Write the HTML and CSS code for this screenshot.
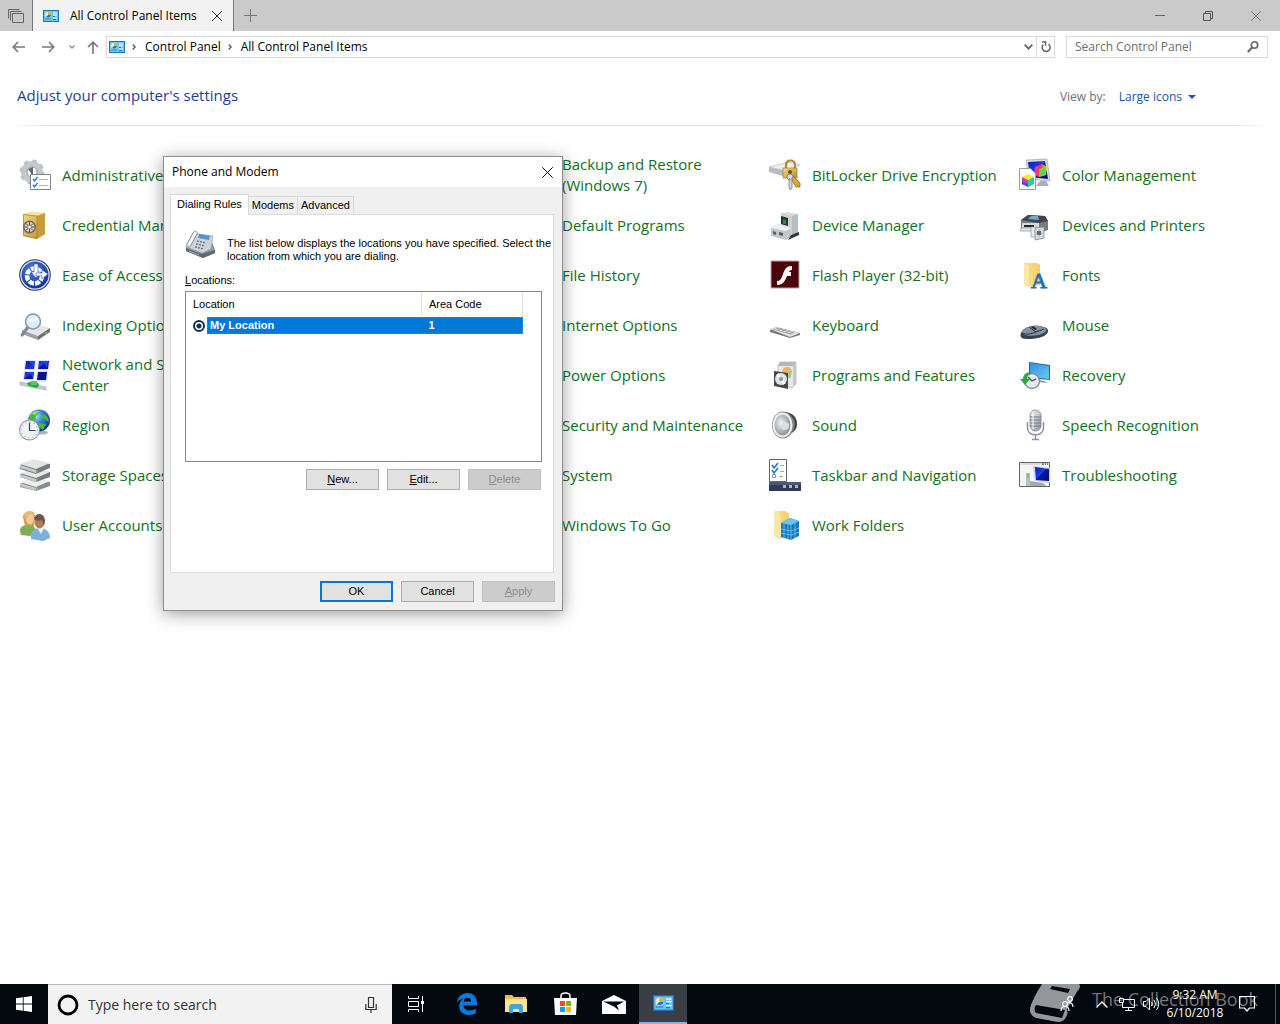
FILE: index.html
```html
<!DOCTYPE html>
<html lang="en">
<head>
<meta charset="utf-8">
<meta name="viewport" content="width=device-width, initial-scale=1">
<title>All Control Panel Items</title>
<link rel="stylesheet" href="styles.css">
</head>
<body>
<svg class="defs" width="0" height="0" aria-hidden="true">
  <defs>
    <linearGradient id="gold" x1="0" y1="0" x2="1" y2="1"><stop offset="0" stop-color="#f3dc8b"/><stop offset="1" stop-color="#b8892c"/></linearGradient>
    <linearGradient id="steel" x1="0" y1="0" x2="1" y2="1"><stop offset="0" stop-color="#f6f7f9"/><stop offset="1" stop-color="#8f959c"/></linearGradient>
    <linearGradient id="folder" x1="0" y1="0" x2="1" y2="0"><stop offset="0" stop-color="#fbe08a"/><stop offset="1" stop-color="#f3cf6b"/></linearGradient>
    <linearGradient id="screen" x1="0" y1="0" x2="1" y2="1"><stop offset="0" stop-color="#0a1db0"/><stop offset=".45" stop-color="#1c3de8"/><stop offset=".5" stop-color="#0a17a0"/><stop offset="1" stop-color="#050d78"/></linearGradient>
    <linearGradient id="sky" x1="0" y1="0" x2="1" y2="1"><stop offset="0" stop-color="#2f94de"/><stop offset="1" stop-color="#6cc7fb"/></linearGradient>
    <radialGradient id="globe" cx=".35" cy=".3" r=".75"><stop offset="0" stop-color="#bfe6ff"/><stop offset=".4" stop-color="#3d8fe0"/><stop offset="1" stop-color="#0b2f86"/></radialGradient>
    <radialGradient id="access" cx=".4" cy=".3" r=".8"><stop offset="0" stop-color="#4f7fd6"/><stop offset="1" stop-color="#0d2a8a"/></radialGradient>
    <radialGradient id="cone" cx=".4" cy=".4" r=".7"><stop offset="0" stop-color="#f2f5f7"/><stop offset=".5" stop-color="#b3bcc3"/><stop offset="1" stop-color="#7d868d"/></radialGradient>
    <linearGradient id="rainbow" x1="0" y1="0" x2="1" y2="0"><stop offset="0" stop-color="#e930d0"/><stop offset=".5" stop-color="#f33"/><stop offset="1" stop-color="#f9e52c"/></linearGradient>
    <symbol id="cpl" viewBox="0 0 16 12">
      <rect width="16" height="12" fill="#1a76bd"/><rect x="1" y="1" width="14" height="10" fill="#6cc6f4"/>
      <circle cx="5" cy="5" r="3" fill="#d9f1ff"/><path d="M5 5V2a3 3 0 0 1 3 3z" fill="#f4a52b"/><path d="M5 5h3a3 3 0 0 1-5 2z" fill="#2476c0"/>
      <path d="M10 3h4M10 5h4M10 8h4" stroke="#fff"/><path d="M2 9h6" stroke="#2e8ac9"/><path d="M10 6.500h2M10 9.500h3" stroke="#236fab"/>
    </symbol>
  </defs>
</svg>

<header class="tabbar">
  <button class="tab-set" aria-label="Tabs you've set aside"><svg width="16" height="14" viewBox="0 0 16 14"><path d="M.5 9.500v-9h11M2.500 11.500v-9h11M4.500 4.500h11v9h-11z" fill="none" stroke="#666"/></svg></button>
  <div class="tab">
    <svg width="16" height="12"><use href="#cpl"/></svg>
    <span>All Control Panel Items</span>
    <button class="plain" aria-label="Close tab"><svg width="10" height="10" viewBox="0 0 10 10"><path d="M0 0l10 10M10 0L0 10" stroke="#333"/></svg></button>
  </div>
  <button class="new-tab" aria-label="New tab"><svg width="13" height="13" viewBox="0 0 13 13"><path d="M6.500 0v13M0 6.500h13" stroke="#777"/></svg></button>
  <div class="window-buttons">
    <button aria-label="Minimize"><svg width="10" height="10" viewBox="0 0 10 10"><path d="M0 4.500h10" stroke="#666"/></svg></button>
    <button aria-label="Restore"><svg width="10" height="10" viewBox="0 0 10 10"><path d="M.5 2.500h7v7h-7zM2.500 2.500v-2h7v7h-2" fill="none" stroke="#555"/></svg></button>
    <button aria-label="Close"><svg width="10" height="10" viewBox="0 0 10 10"><path d="M0 0l10 10M10 0L0 10" stroke="#777"/></svg></button>
  </div>
</header>

<nav class="navbar" aria-label="Address">
  <button class="plain back" aria-label="Back"><svg width="13" height="12" viewBox="0 0 13 12"><path d="M13 6H1.500M6 1L1.200 6 6 11" fill="none" stroke="#777" stroke-width="1.600"/></svg></button>
  <button class="plain forward" aria-label="Forward"><svg width="13" height="12" viewBox="0 0 13 12"><path d="M0 6h11.500M7 1l4.800 5L7 11" fill="none" stroke="#777" stroke-width="1.600"/></svg></button>
  <button class="plain recent" aria-label="Recent locations"><svg width="6" height="4" viewBox="0 0 6 4"><path d="M.5.500L3 3 5.500.500" fill="none" stroke="#888" stroke-width="1.300"/></svg></button>
  <button class="plain up" aria-label="Up"><svg width="12" height="13" viewBox="0 0 12 13"><path d="M6 13V1.500M1 6l5-4.800L11 6" fill="none" stroke="#777" stroke-width="1.600"/></svg></button>
  <div class="address">
    <svg width="16" height="12"><use href="#cpl"/></svg>
    <svg class="crumb" width="4" height="6" viewBox="0 0 4 6"><path d="M.7.500L3.200 3 .7 5.500" fill="none" stroke="#555" stroke-width="1.300"/></svg>
    <a href="#">Control Panel</a>
    <svg class="crumb" width="4" height="6" viewBox="0 0 4 6"><path d="M.7.500L3.200 3 .7 5.500" fill="none" stroke="#555" stroke-width="1.300"/></svg>
    <a href="#">All Control Panel Items</a>
    <button class="plain history" aria-label="Previous locations"><svg width="9" height="6" viewBox="0 0 9 6"><path d="M.7.700l3.800 4 3.800-4" fill="none" stroke="#666" stroke-width="1.800"/></svg></button>
    <button class="refresh" aria-label="Refresh"><svg width="10" height="12" viewBox="0 0 10 12"><path d="M7.500 3.200A4 4 0 1 1 2.300 3.600M1 1h3.600v3.800" fill="none" stroke="#666" stroke-width="1.500"/></svg></button>
  </div>
  <label class="search">
    <input type="text" placeholder="Search Control Panel" aria-label="Search Control Panel">
    <svg width="12" height="12" viewBox="0 0 12 12"><circle cx="7.500" cy="4" r="3.200" fill="none" stroke="#666" stroke-width="1.600"/><path d="M5 6.500L.8 11" stroke="#666" stroke-width="2"/></svg>
  </label>
</nav>

<main>
  <div class="heading">
    <h1>Adjust your computer's settings</h1>
    <span class="view-label">View by:</span>
    <button class="view">Large icons <svg width="8" height="4" viewBox="0 0 8 4"><path d="M0 0h8L4 4z" fill="#1a56b0"/></svg></button>
  </div>

  <div class="items">
    <ul class="column first">
      <li><a href="#"><svg viewBox="0 0 32 32"><circle cx="13" cy="13" r="8" fill="none" stroke="#c3c9ce" stroke-width="6"/><circle cx="13" cy="13" r="11" fill="none" stroke="#bcc3c9" stroke-width="3" stroke-dasharray="4.300 4.340"/><circle cx="13" cy="13" r="5" fill="#fff" stroke="#8d979f"/><path d="M9 10l5 7v-9z" fill="#5f6870"/><path d="M11.500 15.500h20v15h-20z" fill="#fff" stroke="#7b8288"/><path d="M20 20.500h9M20 26.500h9" stroke="#a9b7c4"/><path d="M14 20l1.500 2 3-4M14 26l1.500 2 3-4" fill="none" stroke="#1a77d2" stroke-width="1.300"/></svg>Administrative Tools</a></li>
      <li><a href="#"><svg viewBox="0 0 32 32"><path d="M4 5l7-2 15 1v21l-9 5-13-3z" fill="url(#gold)"/><path d="M4 5l14 2 8-3-14-1z" fill="#f5e3a0"/><path d="M18 7l8-3v21l-8 5z" fill="#c99c37"/><path d="M4.500 5.500L18 7v22.500l-13.500-3z" fill="none" stroke="#a97f2c" stroke-width=".7"/><circle cx="10.500" cy="18" r="6.500" fill="#6f6756"/><circle cx="10.500" cy="18" r="5" fill="#dcd5c3"/><path d="M10.500 13v10M5.500 18h10M7 14.500l7 7M14 14.500l-7 7" stroke="#4c473c"/><circle cx="10.500" cy="18" r="1.500" fill="#eee"/></svg>Credential Manager</a></li>
      <li><a href="#"><svg viewBox="0 0 32 32"><circle cx="16" cy="16" r="15.800" fill="#1e3160"/><circle cx="16" cy="16" r="14.800" fill="#dce5f3"/><circle cx="16" cy="16" r="13.500" fill="url(#access)"/><circle cx="15.500" cy="17" r="7.500" fill="none" stroke="#fff" stroke-width="4.500" stroke-dasharray="5.200 1.200" stroke-dashoffset="-6"/><path d="M15 5h4v8h3l-5 6-5-6h3z" fill="#fff" stroke="#2d55b5" stroke-width=".6"/><path d="M17 14h6v-3l6 4-6 5v-3h-6z" fill="#fff" stroke="#2d55b5" stroke-width=".6"/></svg>Ease of Access Center</a></li>
      <li><a href="#"><svg viewBox="0 0 32 32"><path d="M3 21l14-6 14 4-12 8z" fill="#e3e5e7"/><path d="M3 21l16 6v4L3 25z" fill="#9ca0a5"/><path d="M31 19l-12 8v4l12-8z" fill="#6d7176"/><circle cx="27" cy="24" r="1" fill="#5cd65c"/><path d="M9 18l-6 8" stroke="#7c8994" stroke-width="3" stroke-linecap="round"/><circle cx="14" cy="12.500" r="7.500" fill="#d5ebfb" fill-opacity=".85" stroke="#8996a5" stroke-width="1.500"/><path d="M9 13c3-5 7-5 10-3-2 3-6 2-10 3z" fill="#fff"/></svg>Indexing Options</a></li>
      <li><a href="#"><svg viewBox="0 0 32 32"><path d="M6 1h11l-1 10H5zM19 1h12l-1 10H18zM5 12h11l-1 9H4zM18 12h11l-1 11H17z" fill="#dbe3ef"/><path d="M7 2h9l-1 8H6zM20 2h10l-1 8H19zM6 13h9l-1 7H5zM19 13h9l-1 8h-9z" fill="url(#screen)"/><path d="M10 2l6 0-1 6zM24 2h5l-1 7zM10 13h5l-1 6z" fill="#2545e0"/><path d="M1 23l26 5v3L1 26z" fill="#c8cdd0" stroke="#90969a" stroke-width=".5"/><path d="M8 25c0-3 12-3 12 1l-2 3-8-2z" fill="#22a648"/><path d="M12 22h6v4h-6z" fill="#4acc6b"/></svg>Network and Sharing Center</a></li>
      <li><a href="#"><svg viewBox="0 0 32 32"><ellipse cx="22" cy="23.500" rx="7" ry="2" fill="#a8b3bd"/><circle cx="20" cy="11.500" r="11" fill="url(#globe)"/><path d="M11 8c3-6 8-6 9-4l-3 3-1 4-5 2zM23 5c4 0 7 4 7 8l-3-2-4-2zM20 14l7 1-3 6-4-3z" fill="#49b53a"/><path d="M13 5c2-3 5-3 7-3l-4 4z" fill="#a3e06b"/><circle cx="10.500" cy="21" r="10.500" fill="#8e979f"/><circle cx="10.500" cy="21" r="9.500" fill="#eef3f6"/><path d="M10.500 13.500v8h6" fill="none" stroke="#34495e" stroke-width="1.200"/><circle cx="10.500" cy="21" r="8" fill="none" stroke="#a0afba" stroke-width="1.200" stroke-dasharray="1 3.190"/></svg>Region</a></li>
      <li><a href="#"><svg viewBox="0 0 32 32"><path d="M1 25l10-4 20 2v4l-14 5-16-4z" fill="#888c90"/><path d="M1 23l13-4 17 3-14 6z" fill="#eceded"/><path d="M1 15l10-4 20 2v5l-14 5-16-5z" fill="#777b80"/><path d="M1 14l13-4 17 3-14 6z" fill="#e8e9ea"/><path d="M1 6l10-4 20 3v4l-14 6-16-5z" fill="#777b80"/><path d="M1 5l14-5 16 4-14 6z" fill="#e3e4e6"/><path d="M1 6l16 5v3L1 9zM1 15l16 5v3L1 18zM1 24l16 5v3L1 27z" fill="#c6c8cb"/><path d="M18 11v4M18 20v3M18 28v3" stroke="#a9b85c" stroke-width="1.200"/></svg>Storage Spaces</a></li>
      <li><a href="#"><svg viewBox="0 0 32 32"><path d="M1 22c0-5 4-6 9-6s7 3 7 8l-6 3-9-1z" fill="#7fae57"/><path d="M4 8c0-6 12-8 12 0l-1 9H6z" fill="#c9a257"/><ellipse cx="11" cy="9.500" rx="4" ry="6" fill="#f3c99b"/><path d="M5 6c1-5 10-5 11-1-4-1-7 0-9 6z" fill="#e1bd68"/><path d="M12 27c0-6 4-8 9-8s10 3 10 10l-7 3-12-2z" fill="#7db0de"/><path d="M18 19l4 6 3-6z" fill="#e8f2fb"/><ellipse cx="20.500" cy="13" rx="5" ry="6.500" fill="#b77b51"/><path d="M15 10c1-7 11-7 11 2l-1 5-2-6c-3 1-6 1-8-1z" fill="#6d5748"/></svg>User Accounts</a></li>
    </ul>
    <ul class="column third">
      <li><a href="#"><i class="no-icon"></i>Backup and Restore (Windows 7)</a></li>
      <li><a href="#"><i class="no-icon"></i>Default Programs</a></li>
      <li><a href="#"><i class="no-icon"></i>File History</a></li>
      <li><a href="#"><i class="no-icon"></i>Internet Options</a></li>
      <li><a href="#"><i class="no-icon"></i>Power Options</a></li>
      <li><a href="#"><i class="no-icon"></i>Security and Maintenance</a></li>
      <li><a href="#"><i class="no-icon"></i>System</a></li>
      <li><a href="#"><i class="no-icon"></i>Windows To Go</a></li>
    </ul>
    <ul class="column">
      <li><a href="#"><svg viewBox="0 0 32 32"><path d="M0 8l20-5 11 3-14 6z" fill="#eceef0" stroke="#b0b2bb" stroke-width=".6"/><path d="M0 8l17 4v6L0 13z" fill="#b9bbc4"/><path d="M17 9V6c0-6 9-6 9 0v4" fill="none" stroke="#b38a28" stroke-width="2.200"/><path d="M14 9h14v10H14z" fill="url(#gold)" stroke="#9c7620" stroke-width=".6"/><circle cx="21" cy="13" r="2" fill="#6e5215"/><path d="M22 15l9 9v4h-4l-6-10z" fill="#d5a93c" stroke="#7e5c13" stroke-width=".7"/><circle cx="21" cy="18" r="3" fill="#d8dade" stroke="#777" stroke-width=".8"/><path d="M20 20h3v9l-1.500 2-1.500-2z" fill="#d5d8da" stroke="#777" stroke-width=".8"/></svg>BitLocker Drive Encryption</a></li>
      <li><a href="#"><svg viewBox="0 0 32 32"><path d="M12 4l7-1 10 2v18l-6 4-11-5z" fill="#dcdde1"/><path d="M23 7l6-2v19l-6 3z" fill="#b9bbc1"/><path d="M12 4l11 3v17l-11-3z" fill="#cfd0d6"/><path d="M12 7l7 2v8l-7-2z" fill="#26352c"/><path d="M14 10l3 1v4h-3z" fill="#2d8a4c"/><path d="M2 19l7-4 13 4v9l-5 3-15-4z" fill="#c3c5cb"/><path d="M2 19l7-4 13 4-5 3z" fill="#edeef0"/><path d="M4 22l3 1v3l-3-1zM10 23l4 1v3l-4-1z" fill="#5a606b"/><path d="M22 26l8-3v3l-11 5z" fill="#33363b"/></svg>Device Manager</a></li>
      <li><a href="#"><svg viewBox="0 0 32 32"><path d="M2 2h28v27H2z" fill="#4c0508" stroke="#b4a6a7"/><path d="M23 7c-6 0-7 3-9 8-2 6-3 7-6 7v4c6 0 8-4 10-9h4v-4h-2c1-2 2-2 3-2z" fill="#fff"/></svg>Flash Player (32-bit)</a></li>
      <li><a href="#"><svg viewBox="0 0 32 32"><path d="M1 21l6-3 24 6v2l-10 3L1 23z" fill="#74777b"/><path d="M1 20l6-2 24 6-10 4z" fill="#dfe1e3"/><path d="M4 20l18 5M7 19l18 5M9 21l4-2M13 22l4-2M17 23.500l4-2M21 25l4-2" stroke="#909498" stroke-width=".8"/></svg>Keyboard</a></li>
      <li><a href="#"><svg viewBox="0 0 32 32"><path d="M9 7l2-4h16v22l-4 4-14-4z" fill="#e7e8ea" stroke="#a0a2a5" stroke-width=".6"/><path d="M9 7h15l3-4H11z" fill="#b3b8c0"/><path d="M24 7l3-4v22l-3 3z" fill="#c6c8cc"/><circle cx="18" cy="13" r="5" fill="#f6ae62"/><path d="M17 12h5v7h-5z" fill="#a8cd82"/><path d="M5 12l14 2v16L5 27z" fill="#44484c"/><circle cx="12" cy="20" r="6" fill="#e0e3e6"/><path d="M12 20l-5-4 3-2zM12 20l5 4-3 2z" fill="#fff"/><circle cx="12" cy="20" r="2" fill="#8d9297"/></svg>Programs and Features</a></li>
      <li><a href="#"><svg viewBox="0 0 32 32"><path d="M16 3c8 1 12 5 12 12s-5 9-11 12z" fill="#3d4043"/><path d="M24 9c3 2 3 9 0 12z" fill="#6a6e72"/><ellipse cx="14" cy="16" rx="11" ry="13.500" fill="#84898d"/><ellipse cx="13.500" cy="16" rx="10" ry="12.500" fill="#f0f2f3"/><ellipse cx="13.500" cy="16" rx="8" ry="10.500" fill="url(#cone)"/><circle cx="16" cy="17" r="4" fill="#d9e0e4"/></svg>Sound</a></li>
      <li><a href="#"><svg viewBox="0 0 32 32"><path d="M.5.500h17v22H.5z" fill="#fff" stroke="#666"/><path d="M3 6l2 3 4-5M3 11l2 3 4-5" fill="none" stroke="#1976d2" stroke-width="1.600"/><path d="M3.500 15.500h3v3h-3z" fill="none" stroke="#9b85b9"/><path d="M11 6.500h4M11 12.500h4M10 17.500h4" stroke="#aaa"/><path d="M0 23h32v9H0z" fill="#303c57"/><path d="M0 23h32v3H0z" fill="#49587b"/><path d="M14 26h3v3h-3zM20 26h3v3h-3zM26 26h3v3h-3z" fill="#a9b6cf"/></svg>Taskbar and Navigation</a></li>
      <li><a href="#"><svg viewBox="0 0 32 32"><path d="M5 2l11 0 4 3v22l-10 3-5-3z" fill="url(#folder)"/><path d="M5 2h4l3 7v18l-2 3-5-4z" fill="#f9e7a8"/><path d="M12 14l9-5 9 3v15l-8 4-10-3z" fill="#1479bf"/><path d="M12 14l9-5 9 3-8 4z" fill="#70c5f0"/><path d="M12 20l10 2 8-3M12 24l10 2 8-3M15 14v15M19 15v15M22 16v15M26 14v15" fill="none" stroke="#74c3ee" stroke-width=".8"/></svg>Work Folders</a></li>
    </ul>
    <ul class="column">
      <li><a href="#"><svg viewBox="0 0 32 32"><path d="M7 1l21-1 3 22-21-2z" fill="#d9dce2" stroke="#90959b" stroke-width=".6"/><path d="M9 3l17-1 3 18-18-2z" fill="url(#screen)"/><path d="M16 8l7-3 5 3-1 8-7 2-5-2z" fill="url(#rainbow)"/><path d="M20 10l7-2v8l-7 2z" fill="#5bd94b"/><path d="M21 22l6 0 3 5H17z" fill="#aab0b8"/><path d="M.5 9.500h11l5 5v16H.5z" fill="#fff" stroke="#9b9fa4"/><path d="M3 18l6-3 6 3-6 3z" fill="#ffe82f"/><path d="M3 18l6 3v7l-6-3z" fill="#e834a3"/><path d="M9 21l6-3v7l-6 3z" fill="#26d29a"/><path d="M3 22l6 3v3l-6-3z" fill="#3157ef"/></svg>Color Management</a></li>
      <li><a href="#"><svg viewBox="0 0 32 32"><path d="M2 11l7-5 17 1 3 5v9l-6 2-21-2z" fill="#777c82"/><path d="M2 11l7-5 17 1 3 5-9 2z" fill="#41464c"/><path d="M12 7h7l1 4-11-1z" fill="#75a7cc"/><path d="M3 14h17v6H3z" fill="#d7dadd"/><path d="M5 16h10v2H5z" fill="#202327"/><path d="M2 19h12v3H1z" fill="#e9ebec" stroke="#777" stroke-width=".6"/><path d="M12 18h7v10h-7z" fill="#e7e9eb" stroke="#888" stroke-width=".6"/><path d="M16 19l9-1v11l-9 2z" fill="#d5d8da" stroke="#85898d" stroke-width=".8"/><circle cx="20" cy="24" r="3" fill="#64686d" stroke="#ddd"/></svg>Devices and Printers</a></li>
      <li><a href="#"><svg viewBox="0 0 32 32"><path d="M5 4h13l3 2v20l-10 2-6-2z" fill="url(#folder)"/><path d="M5 4l5 3v21l-5-2z" fill="#fbe8a9"/><text class="font-glyph" x="12" y="29">A</text></svg>Fonts</a></li>
      <li><a href="#"><svg viewBox="0 0 32 32"><path d="M2 24c2-6 12-8 19-7 6 1 9 3 8 6-3 6-13 7-20 7-5 0-9-1-7-6z" fill="#39434d"/><path d="M3 23c2-5 11-7 18-6 5 1 7 3 6 5-3 5-23 7-24 1z" fill="#8592a0"/><path d="M10 18l7 5 8-3M17 23c-5 2-10 3-14 1" fill="none" stroke="#28323d"/><path d="M12 18l4 3 2-1-4-3z" fill="#202832"/></svg>Mouse</a></li>
      <li><a href="#"><svg viewBox="0 0 32 32"><path d="M10 3l21 3v15l-21-2z" fill="#2268a7"/><path d="M11 4l19 3v13l-19-2z" fill="url(#sky)"/><path d="M20 21l5 1 4 2-10-1z" fill="#8f969e"/><circle cx="13" cy="22" r="7.500" fill="#e6eaec" stroke="#85909a" stroke-width="1.500"/><path d="M9 18l4 4 4-2" fill="none" stroke="#505b65" stroke-width="1.400"/><path d="M12 13c-5 0-8 3-8 7H1l5 6 5-6H8c0-3 1-4 4-5z" fill="#29a845"/></svg>Recovery</a></li>
      <li><a href="#"><svg viewBox="0 0 32 32"><path d="M8.500 13v6c0 9 16 9 16 0v-6M16.500 26v4M13 30.500h7" fill="none" stroke="#8e92a0" stroke-width="1.500"/><rect x="11" y="1" width="11" height="21" rx="5.500" fill="url(#steel)" stroke="#7d8190" stroke-width=".8"/><path d="M11 8h11M11 11h11M11 14h11M11 17h11" stroke="#737787" stroke-width="1.100"/><path d="M14 4v16" stroke="#fff"/></svg>Speech Recognition</a></li>
      <li><a href="#"><svg viewBox="0 0 32 32"><path d="M.5 3.500h30v24H.5z" fill="#f5f5f5" stroke="#666"/><path d="M1 4h29v2H1z" fill="#ddd"/><path d="M23 5h2M26 5h1M28 5h1" stroke="#333"/><path d="M14 7l17 2v15l-15-2z" fill="#c6ccd6"/><path d="M16 8l14 2v12l-13-1z" fill="url(#screen)"/><path d="M7 14h4v13H7z" fill="#b9bec3"/><path d="M11 22l13 2 3 3H11z" fill="#a2aab4"/><path d="M8 16h2M8 18h2" stroke="#48b154"/></svg>Troubleshooting</a></li>
    </ul>
  </div>
</main>

<section class="dialog" role="dialog" aria-labelledby="dialog-title">
  <header class="dialog-title">
    <h2 id="dialog-title">Phone and Modem</h2>
    <button class="plain" aria-label="Close"><svg width="11" height="11" viewBox="0 0 11 11"><path d="M.3.300l10.400 10.400M10.700.300L.3 10.700" stroke="#000"/></svg></button>
  </header>
  <div class="dialog-body">
    <div class="tabs" role="tablist">
      <button class="selected" role="tab" aria-selected="true">Dialing Rules</button>
      <button role="tab">Modems</button>
      <button role="tab">Advanced</button>
    </div>
    <div class="panel" role="tabpanel">
      <div class="intro">
        <svg width="32" height="32" viewBox="0 0 32 32"><path d="M1 19l3-8 22-1 4 11v3l-12 5L1 22z" fill="#8e959c"/><path d="M1 19l16 6 13-4v3l-12 5L1 22z" fill="#62696f"/><path d="M1 18L8 4l20 3-2 13-9 4z" fill="#cfd4d9" stroke="#9299a0" stroke-width=".6"/><path d="M14 5l11 2-1 4-11-2z" fill="#4d96cc"/><path d="M2 15L8 4c1-3 5-2 4 1L6 16c-1 3-5 2-4-1z" fill="#f5f6f7" stroke="#6e757c" stroke-width=".8"/><path d="M12 12l9 2M11 15l9 2M10 18l9 2" stroke="#65707a" stroke-width="1.300" stroke-dasharray="2 1"/><path d="M4 22l10 4" stroke="#8fb5cd"/></svg>
        <p>The list below displays the locations you have specified. Select the location from which you are dialing.</p>
      </div>
      <p class="list-label"><u>L</u>ocations:</p>
      <div class="list">
        <table>
          <thead><tr><th>Location</th><th>Area Code</th></tr></thead>
          <tbody><tr>
            <td class="place"><label><input type="radio" name="place" checked><span>My Location</span></label></td>
            <td class="code"><span>1</span></td>
          </tr></tbody>
        </table>
      </div>
      <div class="actions">
        <button class="btn"><span><u>N</u>ew...</span></button>
        <button class="btn"><span><u>E</u>dit...</span></button>
        <button class="btn" disabled><span><u>D</u>elete</span></button>
      </div>
    </div>
    <div class="actions bottom">
      <button class="btn default">OK</button>
      <button class="btn">Cancel</button>
      <button class="btn" disabled><span><u>A</u>pply</span></button>
    </div>
  </div>
</section>

<footer class="taskbar">
  <button class="start" aria-label="Start"><svg width="16" height="16" viewBox="0 0 16 16"><path d="M0 2.300l6.800-1v6.300H0zM7.600 1.200L16 0v7.600H7.600zM0 8.400h6.800v6.300l-6.800-1zM7.600 8.400H16V16l-8.400-1.200z" fill="#fff"/></svg></button>
  <label class="task-search">
    <svg width="22" height="22" viewBox="0 0 22 22"><circle cx="11" cy="11" r="9" fill="none" stroke="#000" stroke-width="2.800"/></svg>
    <input type="text" placeholder="Type here to search" aria-label="Type here to search">
    <svg width="12" height="18" viewBox="0 0 12 18"><path d="M3.500 1.500h5v10h-5zM.8 8v5.500h10.400V8M6 13.500V17" fill="none" stroke="#333" stroke-width="1.200"/></svg>
  </label>
  <button class="task-view" aria-label="Task View"><svg width="17" height="16" viewBox="0 0 17 16"><path d="M.5 0v2.500h10V0M.5 5.500h10v5H.5zM.5 16v-2.500h10V16M14.500 0v16" fill="none" stroke="#fff"/><path d="M13 5h3v3h-3z" fill="#fff"/></svg></button>
  <div class="apps">
    <button aria-label="Edge"><svg width="20" height="22" viewBox="0 0 20 22"><path d="M0 9.500C1 3.500 5 0 10.500 0 17 0 20 5 20 10v2.500H6.500c.3 3.500 3 5 6 5 2.400 0 4.500-.6 6.300-1.700v4.500C17 21.400 14.500 22 12 22 6 22 2.200 18.500 2.200 13c0-3 1.600-5.700 4.500-7.500C4 5.900 1.600 7.200 0 9.500zM6.700 8.500h7.400C14 6 12.700 4.700 10.500 4.700S7 6.200 6.700 8.500z" fill="#0a7bdc"/></svg></button>
    <button aria-label="File Explorer"><svg width="22" height="18" viewBox="0 0 22 18"><path d="M0 0h7l2 2h12v15H0z" fill="#e9bd4f"/><path d="M0 4h22v13H0z" fill="#fce391"/><path d="M4 18v-7l2-2h10l2 2v7h-4v-4H8v4z" fill="#43a6d9"/></svg></button>
    <button aria-label="Store"><svg width="23" height="24" viewBox="0 0 23 24"><path d="M7 7V4c0-4 9-4 9 0v3" fill="none" stroke="#fff" stroke-width="1.500"/><path d="M0 6h23l-1 17H1z" fill="#fff"/><path d="M6 9h5v5H6z" fill="#f04e23"/><path d="M12 9h5v5h-5z" fill="#7eb900"/><path d="M6 15h5v5H6z" fill="#00a3ee"/><path d="M12 15h5v5h-5z" fill="#feb800"/></svg></button>
    <button aria-label="Mail"><svg width="24" height="19" viewBox="0 0 24 19"><path d="M0 6l12-6 12 6v13H0z" fill="#fff"/><path d="M1 6.500h21l-7 4 2 5-5-4z" fill="#050a10"/></svg></button>
    <button class="active" aria-label="Control Panel"><svg width="21" height="16"><use href="#cpl"/></svg></button>
  </div>
  <div class="tray">
    <div class="watermark" aria-hidden="true">
      <svg width="50" height="38" viewBox="0 0 50 38"><path d="M12 0h37q2 2 0 5L36 33q-2 5-8 5L6 34q-7-3-6-10Q3 14 12 0z" fill="#93979a"/><path d="M22 2l18 3-2 4-18-4zM6 21l29 5-3 8-26-5q-3-4 0-8zM37 25L48 6l1 3-11 23z" fill="#05090f"/></svg>
      <span>The Collection Book</span>
    </div>
    <svg class="people" width="14" height="16" viewBox="0 0 14 16"><circle cx="10" cy="3" r="2.300" fill="none" stroke="#fff" stroke-width="1.200"/><circle cx="5" cy="8" r="2.300" fill="none" stroke="#fff" stroke-width="1.200"/><path d="M1 15c0-6 8-6 8 0M8 7c3-1 5 1 5 4" fill="none" stroke="#fff" stroke-width="1.200"/></svg>
    <svg class="chevron" width="12" height="7" viewBox="0 0 12 7"><path d="M.5 6.500L6 1l5.500 5.500" fill="none" stroke="#fff" stroke-width="1.300"/></svg>
    <svg class="network" width="16" height="13" viewBox="0 0 16 13"><path d="M4.500 1.500h11v8H3.500V5M9.500 10v2M6 12.500h7M.5.500h4v4h-4z" fill="none" stroke="#fff"/></svg>
    <svg class="volume" width="17" height="14" viewBox="0 0 17 14"><path d="M.5 4.500H3L6.500 1v12L3 9.500H.5zM8.500 5q1.500 2 0 4M11 3q3 4 0 8M13.500 1q4.500 6 0 12" fill="none" stroke="#fff"/></svg>
    <div class="clock"><span>9:32 AM</span><span>6/10/2018</span></div>
    <svg class="notify" width="16" height="16" viewBox="0 0 16 16"><path d="M.5.500h15v11.500h-5L8 15l-2.500-3h-5z" fill="none" stroke="#fff" stroke-width="1.200"/></svg>
    <button class="show-desktop" aria-label="Show desktop"></button>
  </div>
</footer>
</body>
</html>
```
FILE: styles.css
```css
* { box-sizing: border-box; }

body {
  margin: 0;
  min-height: 100vh;
  display: flex;
  flex-direction: column;
  position: relative;
  background: #fff;
  color: #000;
  font: 12px/16px "Open Sans", "Noto Sans", sans-serif;
}

button, input { font: inherit; color: inherit; }
button { border: 0; padding: 0; background: none; }
a { color: inherit; text-decoration: none; }
h1, h2, p, ul { margin: 0; padding: 0; font-weight: normal; }
svg { flex: none; display: block; }
.defs { position: absolute; }
.plain { display: flex; }

/* Tab strip */
.tabbar { display: flex; height: 31px; background: #cacaca; }
.tab-set { width: 32px; display: flex; align-items: center; justify-content: center; }
.tab {
  width: 202px;
  display: flex;
  align-items: center;
  gap: 11px;
  padding: 0 11px 0 10px;
  background: #f2f2f2;
  border: solid #777;
  border-width: 0 1px;
  white-space: nowrap;
}
.tab .plain { margin-left: auto; }
.new-tab { padding: 0 10px; display: flex; align-items: center; }
.window-buttons { margin-left: auto; display: flex; }
.window-buttons button { width: 48px; display: flex; align-items: center; justify-content: center; }

/* Address bar */
.navbar { display: flex; align-items: center; height: 32px; padding: 0 12px; }
.back { margin-right: 17px; }
.forward { margin-right: 14px; }
.recent { margin-right: 12px; }
.up { margin-right: 7px; }
.address { flex: 1; display: flex; align-items: center; height: 22px; border: 1px solid #d9d9d9; padding-left: 2px; }
.crumb { margin: 0 9px 0 7px; }
.history { margin-left: auto; margin-right: 3px; }
.refresh { width: 18px; height: 20px; display: flex; align-items: center; justify-content: center; border-left: 1px solid #d9d9d9; }
.search { width: 202px; margin-left: 11px; height: 22px; display: flex; align-items: center; border: 1px solid #d9d9d9; padding: 0 8px; }
.search input { flex: 1; min-width: 0; border: 0; padding: 0; outline: 0; }
.search input::placeholder { color: #6d6d6d; opacity: 1; }

/* Control panel page */
main { flex: 1; }
.heading { display: flex; align-items: center; height: 63px; padding: 1px 84px 0 17px; }
h1 { flex: 1; font-size: 15px; line-height: 20px; color: #1e3f8f; }
.view-label { color: #6a7180; margin-right: 13px; padding-top: 4px; }
.view { display: flex; align-items: center; gap: 6px; padding-top: 4px; color: #1a56b0; }
.items {
  display: grid;
  grid-template-columns: repeat(5, minmax(0, 250px));
  margin: 0 0 0 12px;
  padding-top: 24px;
  position: relative;
}
.items::before {
  content: "";
  position: absolute;
  top: -1px;
  left: 0;
  right: 12px;
  height: 1px;
  background: linear-gradient(90deg, #fff, #d8e1e6 3%, #d8e1e6 97%, #fff);
}
.column { list-style: none; }
.third { grid-column: 3; }
.column li { height: 50px; }
.column a { display: flex; align-items: center; gap: 11px; height: 50px; padding: 0 12px 0 7px; font-size: 15px; line-height: 21px; color: #147022; }
.column svg, .no-icon { width: 32px; height: 32px; flex: none; }
.column svg { overflow: visible; }
.font-glyph { font: 22px "Liberation Serif", serif; fill: #1c72b8; stroke: #1c72b8; }

/* Phone and Modem window */
.dialog {
  position: absolute;
  left: 163px;
  top: 156px;
  width: 400px;
  border: 1px solid #8a8f91;
  background: #f0f0f0;
  box-shadow: 0 3px 16px rgba(0, 0, 0, .38);
  font: 11px/13px "Liberation Sans", Arial, sans-serif;
}
.dialog-title { display: flex; align-items: center; justify-content: space-between; height: 30px; padding: 0 9px 0 8px; background: #fff; }
h2 { font: 12px/16px "Open Sans", "Noto Sans", sans-serif; }
.dialog-body { padding: 7px 7px 8px 6px; }
.tabs { display: flex; align-items: flex-end; height: 20px; }
.tabs button { height: 18px; padding: 0 3px; border: 1px solid #d9d9d9; border-width: 1px 1px 0 0; }
.tabs .selected { position: relative; height: 21px; margin-bottom: -1px; padding: 0 6px 2px; background: #fff; border-left-width: 1px; }
.panel { height: 359px; margin-right: 1px; padding: 14px 11px 0 14px; border: 1px solid #dcdcdc; background: #fff; }
.intro { display: flex; gap: 10px; margin-right: -11px; }
.intro p { flex: 1; padding-top: 8px; }
.list-label { margin-top: 11px; margin-bottom: 4px; }
.list { height: 171px; border: 1px solid #828790; }
table { width: 337px; border-collapse: collapse; table-layout: fixed; }
th { height: 25px; padding: 0 6px 0 7px; text-align: left; font-weight: normal; border-right: 1px solid #e3e3e3; }
th:last-child { width: 101px; }
td { height: 17px; padding: 0; font-weight: bold; color: #fff; }
.place label { display: flex; align-items: center; padding-left: 7px; }
.place span, .code span { height: 17px; padding: 1px 2px; background: #0078d7; border: 1px dotted #b86a2c; }
.place span { flex: 1; margin-left: 2px; border-right: 0; }
.code span { display: block; padding-left: 7px; border-left: 0; }
.place input { appearance: none; width: 12px; height: 12px; margin: 0; border: 2px solid #0c3350; border-radius: 50%; background: radial-gradient(circle, #0c3350 2px, #fff 3px); }
.actions { display: flex; justify-content: flex-end; gap: 8px; margin-top: 7px; }
.panel .actions { margin-right: 1px; }
.bottom { margin-top: 8px; }
.btn { width: 73px; height: 21px; border: 1px solid #adadad; background: #e1e1e1; }
.btn.default { border: 2px solid #0078d7; }
.btn:disabled { background: #ccc; border-color: #bfbfbf; color: #8d8d8d; }

/* Taskbar */
.taskbar { display: flex; height: 40px; background: #04080f; color: #fff; }
.start, .task-view { width: 48px; display: flex; align-items: center; justify-content: center; }
.task-search { width: 344px; display: flex; align-items: center; gap: 9px; padding: 0 15px 0 9px; background: #f2f2f2; border-top: 1px solid #b8b8b8; }
.task-search input { flex: 1; min-width: 0; border: 0; padding: 0; outline: 0; background: none; font-size: 14px; line-height: 20px; }
.task-search input::placeholder { color: #333; opacity: 1; }
.apps { display: flex; gap: 1px; margin-left: 3px; }
.apps button { width: 48px; display: flex; align-items: center; justify-content: center; }
.apps .active { background: #3a3f47; border-bottom: 2px solid #76b9ed; }
.tray { position: relative; display: flex; align-items: center; margin-left: auto; }
.watermark { position: absolute; left: -30px; top: 0; display: flex; gap: 12px; white-space: nowrap; color: #74777b; font-size: 18px; line-height: 30px; }
.tray > svg { position: relative; }
.people { margin-right: 22px; }
.chevron { margin-right: 11px; }
.network { margin-right: 8px; }
.volume { margin-right: 3px; }
.clock { position: relative; display: flex; flex-direction: column; align-items: center; width: 64px; line-height: 18px; }
.notify { margin-left: 12px; margin-right: 20px; }
.show-desktop { width: 5px; height: 40px; border-left: 1px solid #555; }
```
